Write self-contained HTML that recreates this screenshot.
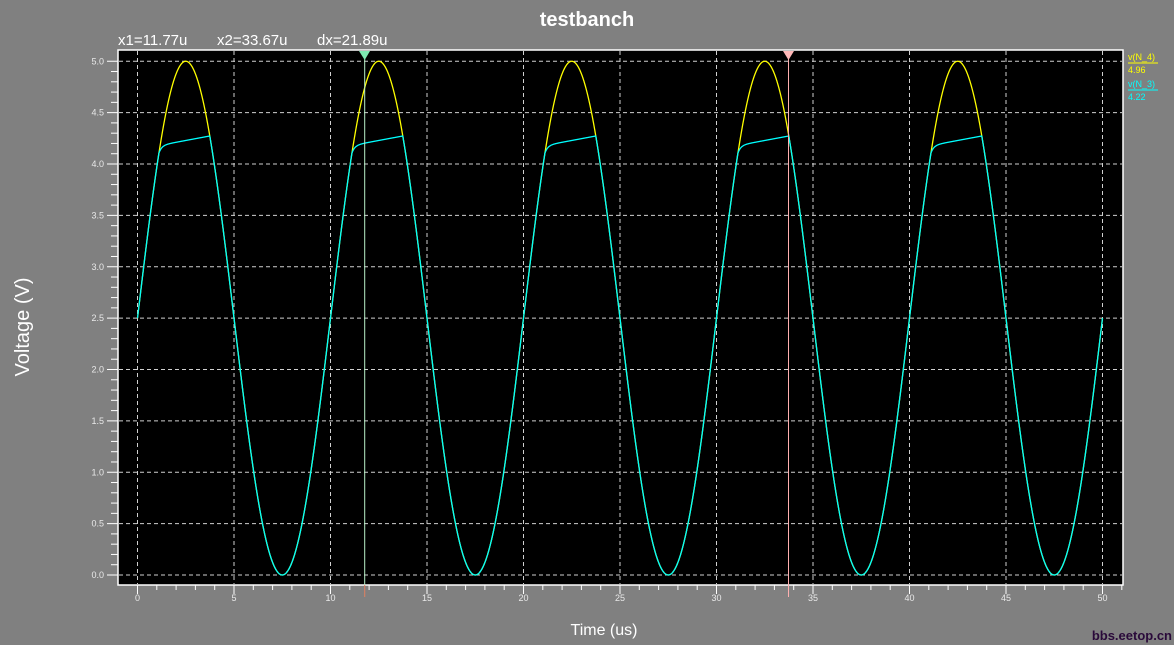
<!DOCTYPE html>
<html><head><meta charset="utf-8">
<style>
html,body{margin:0;padding:0;background:#808080;width:1174px;height:645px;overflow:hidden}
svg{display:block}
text{font-family:"Liberation Sans",sans-serif}
</style></head>
<body>
<svg id="s" width="1174" height="645" xmlns="http://www.w3.org/2000/svg">
<rect width="1174" height="645" fill="#808080"/>
<text x="587" y="26" font-size="20" font-weight="bold" fill="#fff" text-anchor="middle">testbanch</text>
<text x="118" y="45" font-size="15" fill="#fff">x1=11.77u</text>
<text x="217" y="45" font-size="15" fill="#fff">x2=33.67u</text>
<text x="317" y="45" font-size="15" fill="#fff">dx=21.89u</text>
<rect x="118" y="50" width="1005" height="535" fill="#000" stroke="#fff" stroke-width="1.5"/>
<g id="grid" stroke="#d0d0d0" stroke-width="1" stroke-dasharray="4,3"></g>
<g id="ticks" stroke="#fff" stroke-width="1"></g>
<g id="labels" font-size="9" fill="#e8e8e8"></g>
<path id="yel" fill="none" stroke="#ffff00" stroke-width="1.3"/>
<path id="cy" fill="none" stroke="#00ffff" stroke-width="1.3"/>
<line x1="364.7" y1="52" x2="364.7" y2="585" stroke="#b8f0c8" stroke-width="1"/>
<line x1="364.7" y1="585" x2="364.7" y2="597" stroke="#e08060" stroke-width="1"/>
<polygon points="359,51 370,51 364.7,60" fill="#7de8b0"/>
<line x1="788.5" y1="52" x2="788.5" y2="597" stroke="#ffb0b0" stroke-width="1"/>
<polygon points="783,51 794,51 788.5,60" fill="#ffb8b8"/>
<text x="1128" y="60" font-size="9" fill="#ffff00">v(N_4)</text>
<line x1="1128" y1="63" x2="1158" y2="63" stroke="#ffff00"/>
<text x="1128" y="73" font-size="9" fill="#ffff00">4.96</text>
<text x="1128" y="87" font-size="9" fill="#00ffff">v(N_3)</text>
<line x1="1128" y1="90" x2="1158" y2="90" stroke="#00ffff"/>
<text x="1128" y="100" font-size="9" fill="#00ffff">4.22</text>
<text transform="translate(29,327) rotate(-90)" font-size="20" fill="#fff" text-anchor="middle">Voltage (V)</text>
<text x="604" y="635" font-size="16" fill="#fff" text-anchor="middle">Time (us)</text>
<text x="1172" y="640" font-size="13" font-weight="bold" fill="#2a0a3a" text-anchor="end">bbs.eetop.cn</text>
</svg>
<script>
var NS="http://www.w3.org/2000/svg";
function X(t){return 137.5+t*19.3}
function Y(v){return 575-v*102.75}
function el(p,n,a){var e=document.createElementNS(NS,n);for(var k in a)e.setAttribute(k,a[k]);if(a.txt){e.textContent=a.txt;e.removeAttribute('txt')}p.appendChild(e);return e}
var g=document.getElementById('grid'),tk=document.getElementById('ticks'),lb=document.getElementById('labels');
for(var i=0;i<=10;i++){var v=i*0.5,y=Y(v);
 el(g,'line',{x1:119,y1:y,x2:1122,y2:y});
 el(lb,'text',{x:104,y:y+3,'text-anchor':'end',txt:v.toFixed(1)});}
for(var i=0;i<=51;i++){var y=Y(i*0.1);if(y<51)continue;el(tk,'line',{x1:(i%5==0?107:111),y1:y,x2:118,y2:y});}
for(var t=0;t<=50;t+=5){var x=X(t);el(g,'line',{x1:x,y1:51,x2:x,y2:584});
 el(lb,'text',{x:x,y:601,'text-anchor':'middle',txt:String(t)});}
for(var t=0;t<=51;t++){var x=X(t);if(x>1122)continue;el(tk,'line',{x1:x,y1:585,x2:x,y2:(t%5==0?594:590)});}
var a="",b="";
for(var k=0;k<=5000;k++){var t=k*0.01;var yv=2.5+2.5*Math.sin(2*Math.PI*t/10);
 var p=t%10,cv=yv;
 if(p>1.1&&p<3.95){var c=4.1+0.08*(1-Math.exp(-(p-1.1)/0.15))+0.035*(p-1.1);cv=Math.min(yv,c);}
 a+=(k?"L":"M")+X(t).toFixed(2)+" "+Y(yv).toFixed(2);
 b+=(k?"L":"M")+X(t).toFixed(2)+" "+Y(cv).toFixed(2);}
document.getElementById('yel').setAttribute('d',a);
document.getElementById('cy').setAttribute('d',b);
</script>
</body></html>
